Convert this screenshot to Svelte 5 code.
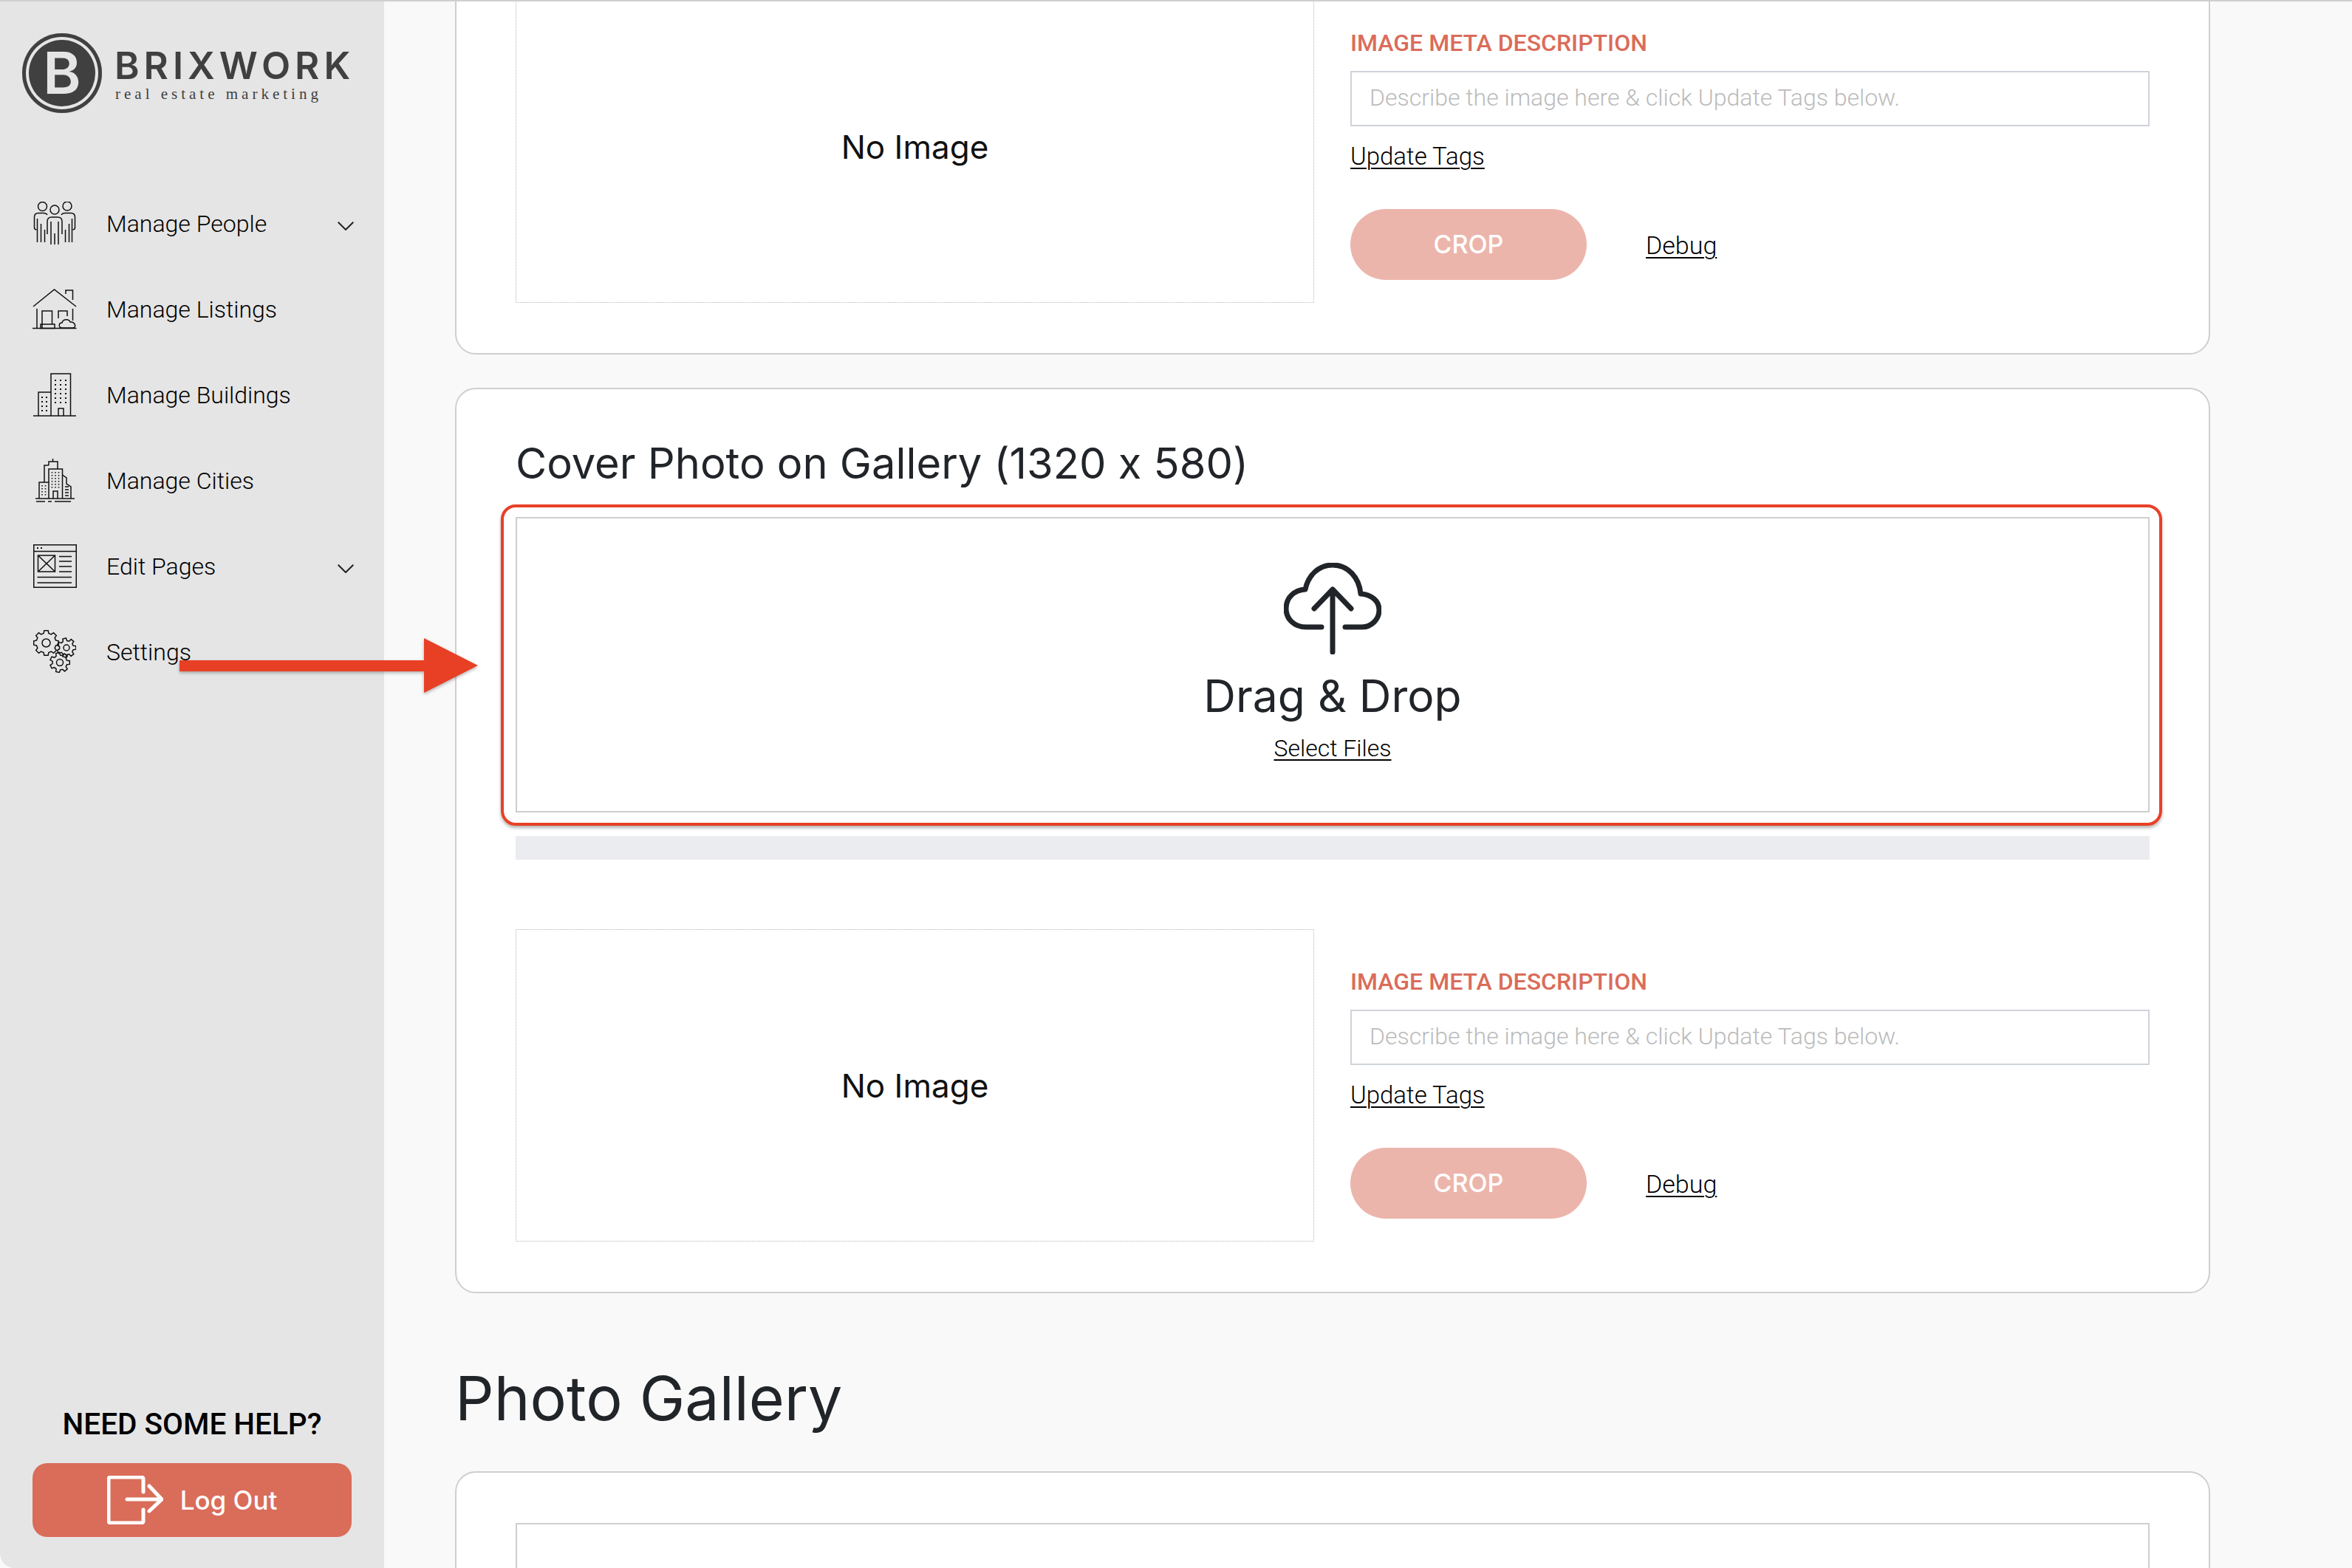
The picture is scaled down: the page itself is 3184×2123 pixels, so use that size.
<script>
  const nav = [
    { label: "Manage People", icon: "people", more: true },
    { label: "Manage Listings", icon: "house" },
    { label: "Manage Buildings", icon: "buildings" },
    { label: "Manage Cities", icon: "cities" },
    { label: "Edit Pages", icon: "pages", more: true },
    { label: "Settings", icon: "gears" },
  ];

  // outline of a cog, teeth sit between r and r - 3.5
  function gear(cx, cy, r, teeth) {
    let d = "";
    const step = (Math.PI * 2) / teeth;
    for (let i = 0; i < teeth; i++) {
      const a = i * step;
      const pts = [
        [r - 3.5, a - step * 0.32],
        [r, a - step * 0.2],
        [r, a + step * 0.2],
        [r - 3.5, a + step * 0.32],
      ];
      for (const [rad, ang] of pts) {
        d += (d ? "L" : "M") + (cx + rad * Math.cos(ang)).toFixed(1) + " " + (cy + rad * Math.sin(ang)).toFixed(1);
      }
    }
    return d + "Z";
  }
</script>

{#snippet imageRow()}
  <div class="image-row">
    <div class="no-image">No Image</div>
    <div class="meta">
      <div class="meta-label">IMAGE META DESCRIPTION</div>
      <input class="meta-input" placeholder="Describe the image here & click Update Tags below." />
      <a class="link update" href="#tags">Update Tags</a>
      <div class="actions">
        <button class="crop">CROP</button>
        <a class="link debug" href="#debug">Debug</a>
      </div>
    </div>
  </div>
{/snippet}

<div class="page">
  <aside class="sidebar">
    <div class="logo">
      <div class="logo-mark"><span>B</span></div>
      <div class="logo-text">
        <div class="logo-name">BRIXWORK</div>
        <div class="logo-sub">real estate marketing</div>
      </div>
    </div>

    <nav class="nav">
      {#each nav as item}
        <div class="nav-row">
          <div class="nav-icon">
            {#if item.icon === "people"}
              <svg width="58" height="58" viewBox="0 0 58 58">
                <circle cx="12.5" cy="6.5" r="6" />
                <circle cx="29" cy="11" r="6" />
                <circle cx="46" cy="6" r="6" />
                <path d="M19 18 C18 16 16 15.500 14 15.500 H7 C3 15.500 1.500 18 1.500 21 V35 Q1.500 38 4.500 38" />
                <path d="M38 18 C39 16 41 15.500 43 15.500 H51 C55 15.500 56.500 18 56.500 21 V35 Q56.500 38 53.500 38" />
                <path d="M19 44 V27 Q19 21 25 21 H33 Q39 21 39 27 V44" />
                <path d="M5.500 23 V55 M10.500 30 V55 M15.500 38 V55 M24 27 V58 M29 43 V58 M34 27 V58 M43.500 38 V55 M48.500 30 V55 M52.500 23 V55" />
              </svg>
            {:else if item.icon === "house"}
              <svg width="60" height="55" viewBox="0 0 60 55">
                <path d="M1 24 L29.500 1 L59 24" />
                <path d="M45 7 V2 H54.500 V15" />
                <path d="M6 27 V53 M0 53.500 H59.500" />
                <path d="M13 53 V30 H26.500 V48" />
                <rect x="11" y="48" width="19" height="5.500" />
                <path d="M35 40 V30 H47 V37" />
                <path d="M54.500 27 V43" />
                <path d="M40 53 C35 53 35 46 40 46 C41 41 49 40 51 45 C57 44 61 53 54 53 Z" />
              </svg>
            {:else if item.icon === "buildings"}
              <svg width="58" height="59" viewBox="0 0 58 59">
                <path d="M0 58 H58" />
                <path d="M24 58 V1 H50.500 V58" />
                <path d="M24 26 H7 V58" />
                <path d="M34 58 V48 H41 V58" />
                <path class="dots" d="M30 9 V44 M37 9 V44 M44 9 V44 M12 32 V54 M18 32 V54" />
              </svg>
            {:else if item.icon === "cities"}
              <svg width="53" height="59" viewBox="0 0 53 59">
                <path d="M0 54 H53" />
                <path class="thin" d="M1 58 H13 M17 58 H22 M26 58 H48" />
                <path d="M23.500 0 V4 M18 9 V4 H30 V14" />
                <path d="M12 32 V9 H18 M18 54 V14 H36.500 V54" />
                <path d="M18 32 H5 V54" />
                <path d="M36.500 22 L42 26 V34 L48 38 V54" />
                <path d="M24 54 V44 H30 V54" />
                <path class="dots fine" d="M22.500 18 V40 M27 18 V40 M31.500 18 V40 M9 36 V52 M13.500 36 V52" />
                <path class="thin" d="M40 38 H45 M40 42 H45 M40 46 H45 M40 50 H45" />
              </svg>
            {:else if item.icon === "pages"}
              <svg width="59" height="59" viewBox="0 0 59 59">
                <rect x="0.750" y="0.750" width="57.500" height="57.500" />
                <path d="M1 9.500 H58" />
                <path class="dots heavy" d="M5 5 H13" />
                <rect x="6.500" y="15" width="23" height="22" />
                <path d="M6.500 15 L29.500 37 M29.500 15 L6.500 37" />
                <path d="M35 16.500 H52 M35 23 H52 M35 30 H52 M35 37 H52 M5.500 44.500 H52 M5.500 52 H52" />
              </svg>
            {:else}
              <svg width="58" height="58" viewBox="0 0 58 58">
                <path d={gear(17.500, 17.500, 17, 8)} />
                <circle cx="17.500" cy="17.500" r="5.500" />
                <path d={gear(45, 24, 13, 7)} />
                <circle cx="45" cy="24" r="4" />
                <path d={gear(36, 44, 13.500, 7)} />
                <circle cx="36" cy="44" r="4.500" />
              </svg>
            {/if}
          </div>
          <span class="nav-label">{item.label}</span>
          {#if item.more}
            <svg class="chev" width="22" height="12" viewBox="0 0 22 12"><path d="M0.700 0.700 L11 11 L21.300 0.700" /></svg>
          {/if}
        </div>
      {/each}
    </nav>

    <div class="help">
      <div class="help-title">NEED SOME HELP?</div>
      <button class="logout">
        <svg width="76" height="66" viewBox="0 0 76 66">
          <path d="M49 22 V5 Q49 2 46 2 H5 Q2 2 2 5 V61 Q2 64 5 64 H46 Q49 64 49 61 V46" />
          <path d="M27 32 H74 M57 14 L74 32 L57 48" />
        </svg>
        <span>Log Out</span>
      </button>
    </div>
  </aside>

  <main class="main">
    <section class="card first">
      {@render imageRow()}
    </section>

    <section class="card">
      <h2 class="card-title">Cover Photo on Gallery (1320 x 580)</h2>
      <div class="dropzone">
        <div class="highlight"></div>
        <svg class="cloud" width="132" height="124" viewBox="0 0 132 124">
          <path d="M51 87 H30 C14 87 3 76 3 62 C3 47 14 37 29 36 C33 16 48 3 66 3 C87 3 102 20 104 42 C118 43 129 51 129 64 C129 77 118 87 106 87 H83" />
          <path d="M66 121 V36 M41 62 L66 36 L91 62" />
        </svg>
        <div class="drop-title">Drag &amp; Drop</div>
        <a class="link select" href="#files">Select Files</a>
      </div>
      <div class="progress"></div>
      {@render imageRow()}
    </section>

    <h1 class="gallery-title">Photo Gallery</h1>

    <section class="card last">
      <div class="gallery-box"></div>
    </section>
  </main>

  <svg class="arrow" width="420" height="90" viewBox="0 0 420 90">
    <path d="M0 30 H331 V0 L404 37 L331 74 V45 H0 Z" />
  </svg>
</div>

<style>
  :global(body) {
    margin: 0;
    background: #f9f9f9;
  }
  .page {
    position: relative;
    display: flex;
    height: 2123px;
    box-sizing: border-box;
    border-top: 2px solid #cfcfcf;
    overflow: hidden;
    font-family: Roboto, sans-serif;
    font-weight: 300;
    color: #000;
    font-feature-settings: "calt" 0;
  }

  .sidebar {
    width: 520px;
    flex: none;
    display: flex;
    flex-direction: column;
    background: #e5e5e5;
    border-bottom-left-radius: 20px;
  }
  .logo {
    display: flex;
    align-items: center;
    gap: 17px;
    padding: 43px 0 0 30px;
  }
  .logo-mark {
    width: 108px;
    height: 108px;
    border-radius: 50%;
    background: #404040;
    box-shadow: inset 0 0 0 5px #404040, inset 0 0 0 9px #e5e5e5;
    display: flex;
    align-items: center;
    justify-content: center;
  }
  .logo-mark span {
    font-family: Inter, sans-serif;
    font-weight: 600;
    font-size: 78px;
    line-height: 1;
    color: #e5e5e5;
  }
  .logo-text {
    color: #404040;
    padding-top: 5px;
  }
  .logo-name {
    font-family: Inter, sans-serif;
    font-weight: 600;
    font-size: 51px;
    line-height: 50px;
    letter-spacing: 6px;
  }
  .logo-sub {
    font-family: "Liberation Serif", serif;
    font-weight: 400;
    font-size: 21px;
    line-height: 24px;
    letter-spacing: 5px;
    margin-top: 1px;
    margin-left: 1px;
  }

  .nav {
    margin-top: 91px;
  }
  .nav-row {
    display: flex;
    align-items: center;
    height: 116px;
    padding: 0 41px 0 44px;
  }
  .nav-icon {
    width: 60px;
    display: flex;
    justify-content: center;
    margin-right: 40px;
  }
  .nav-icon svg {
    fill: none;
    stroke: #111;
    stroke-width: 1.500;
    display: block;
  }
  .nav-icon .dots {
    stroke-width: 2;
    stroke-dasharray: 2 4;
  }
  .nav-icon .fine {
    stroke-width: 1.600;
    stroke-dasharray: 1.600 2.400;
  }
  .nav-icon .heavy {
    stroke-width: 2;
    stroke-dasharray: 2 3;
  }
  .nav-icon .thin {
    stroke-width: 1.300;
  }
  .nav-label {
    font-size: 32px;
    line-height: 40px;
    padding-top: 2px;
  }
  .chev {
    margin-left: auto;
    margin-top: 7px;
    fill: none;
    stroke: #222;
    stroke-width: 2;
  }

  .help {
    margin-top: auto;
    padding: 0 44px 42px;
  }
  .help-title {
    font-weight: 500;
    font-size: 40.500px;
    line-height: 48px;
    text-align: center;
    margin-bottom: 29px;
  }
  .logout {
    width: 100%;
    height: 100px;
    border: 0;
    border-radius: 20px;
    background: #da6c5a;
    color: #fff;
    display: flex;
    align-items: center;
    justify-content: center;
    gap: 23px;
    font-family: Inter, sans-serif;
    font-weight: 500;
    font-size: 35px;
    padding: 0;
  }
  .logout svg {
    fill: none;
    stroke: #fff;
    stroke-width: 5;
    stroke-linecap: round;
    stroke-linejoin: round;
  }

  .main {
    flex: 1;
    min-width: 0;
    padding: 0 192px 0 96px;
  }
  .card {
    background: #fff;
    border: 2px solid #cfcfcf;
    border-radius: 28px;
    padding: 66px 80px 68px;
    margin-bottom: 45px;
  }
  .card.first {
    margin-top: -83px;
  }
  .card.last {
    padding-top: 68px;
    margin-bottom: 0;
  }
  .card-title {
    margin: 0;
    font-family: Inter, sans-serif;
    font-weight: 400;
    font-size: 57.800px;
    line-height: 68px;
    padding-bottom: 2px;
    color: #212529;
  }
  .dropzone {
    position: relative;
    margin-top: 37px;
    height: 400px;
    box-sizing: border-box;
    border: 2px solid #cfcfcf;
    display: flex;
    flex-direction: column;
    align-items: center;
  }
  .highlight {
    position: absolute;
    inset: -19px -19px -20px -22px;
    border: 4px solid #e84025;
    border-radius: 20px;
    box-shadow: 0 3px 4px rgba(0, 0, 0, 0.3);
    pointer-events: none;
  }
  .cloud {
    margin-top: 60px;
    fill: none;
    stroke: #212529;
    stroke-width: 7;
    stroke-linecap: round;
    stroke-linejoin: round;
  }
  .drop-title {
    font-family: Inter, sans-serif;
    font-weight: 400;
    font-size: 60.500px;
    line-height: 64px;
    margin-top: 24px;
    color: #212529;
  }
  .select {
    margin-top: 20px;
  }
  .progress {
    height: 32px;
    margin: 32px 0 94px;
    background: #ebecef;
  }

  .image-row {
    display: grid;
    grid-template-columns: 1081px 1fr;
    column-gap: 49px;
  }
  .no-image {
    height: 423px;
    box-sizing: border-box;
    border: 1px dotted #b5b5b5;
    display: flex;
    align-items: center;
    justify-content: center;
    font-family: Inter, sans-serif;
    font-weight: 400;
    font-size: 44px;
    color: #111;
  }
  .meta {
    padding-top: 53px;
  }
  .meta-label {
    font-weight: 500;
    font-size: 32px;
    line-height: 36px;
    color: #da6c5a;
  }
  .meta-input {
    display: block;
    width: 100%;
    height: 75px;
    box-sizing: border-box;
    margin-top: 20px;
    padding: 0 24px 3px 24px;
    border: 2px solid #d0d3da;
    border-radius: 0;
    outline: none;
    font-family: Roboto, sans-serif;
    font-weight: 300;
    font-size: 32px;
  }
  .meta-input::placeholder {
    color: #bbb;
    opacity: 1;
  }
  .link {
    font-size: 32px;
    line-height: 38px;
    color: #000;
    text-decoration: underline;
    text-underline-offset: 4px;
    text-decoration-thickness: 2px;
  }
  .update {
    display: block;
    margin-top: 22px;
    font-size: 33px;
  }
  .debug {
    font-size: 34px;
    padding-top: 2px;
  }
  .actions {
    display: flex;
    align-items: center;
    gap: 80px;
    margin-top: 52px;
  }
  .crop {
    width: 320px;
    height: 96px;
    border: 0;
    border-radius: 48px;
    background: #ecb5ac;
    color: #fff;
    font-family: Inter, sans-serif;
    font-weight: 500;
    font-size: 34px;
    padding: 0 0 2px;
  }

  .gallery-title {
    margin: 0;
    font-family: Inter, sans-serif;
    font-weight: 400;
    font-size: 82.500px;
    line-height: 100px;
    padding-top: 47px;
    padding-bottom: 49px;
    color: #212529;
  }
  .gallery-box {
    height: 300px;
    border: 2px solid #cfcfcf;
  }

  .arrow {
    position: absolute;
    left: 243px;
    top: 862px;
    fill: #e84025;
    filter: drop-shadow(0 2px 2px rgba(0, 0, 0, 0.3));
  }
</style>
